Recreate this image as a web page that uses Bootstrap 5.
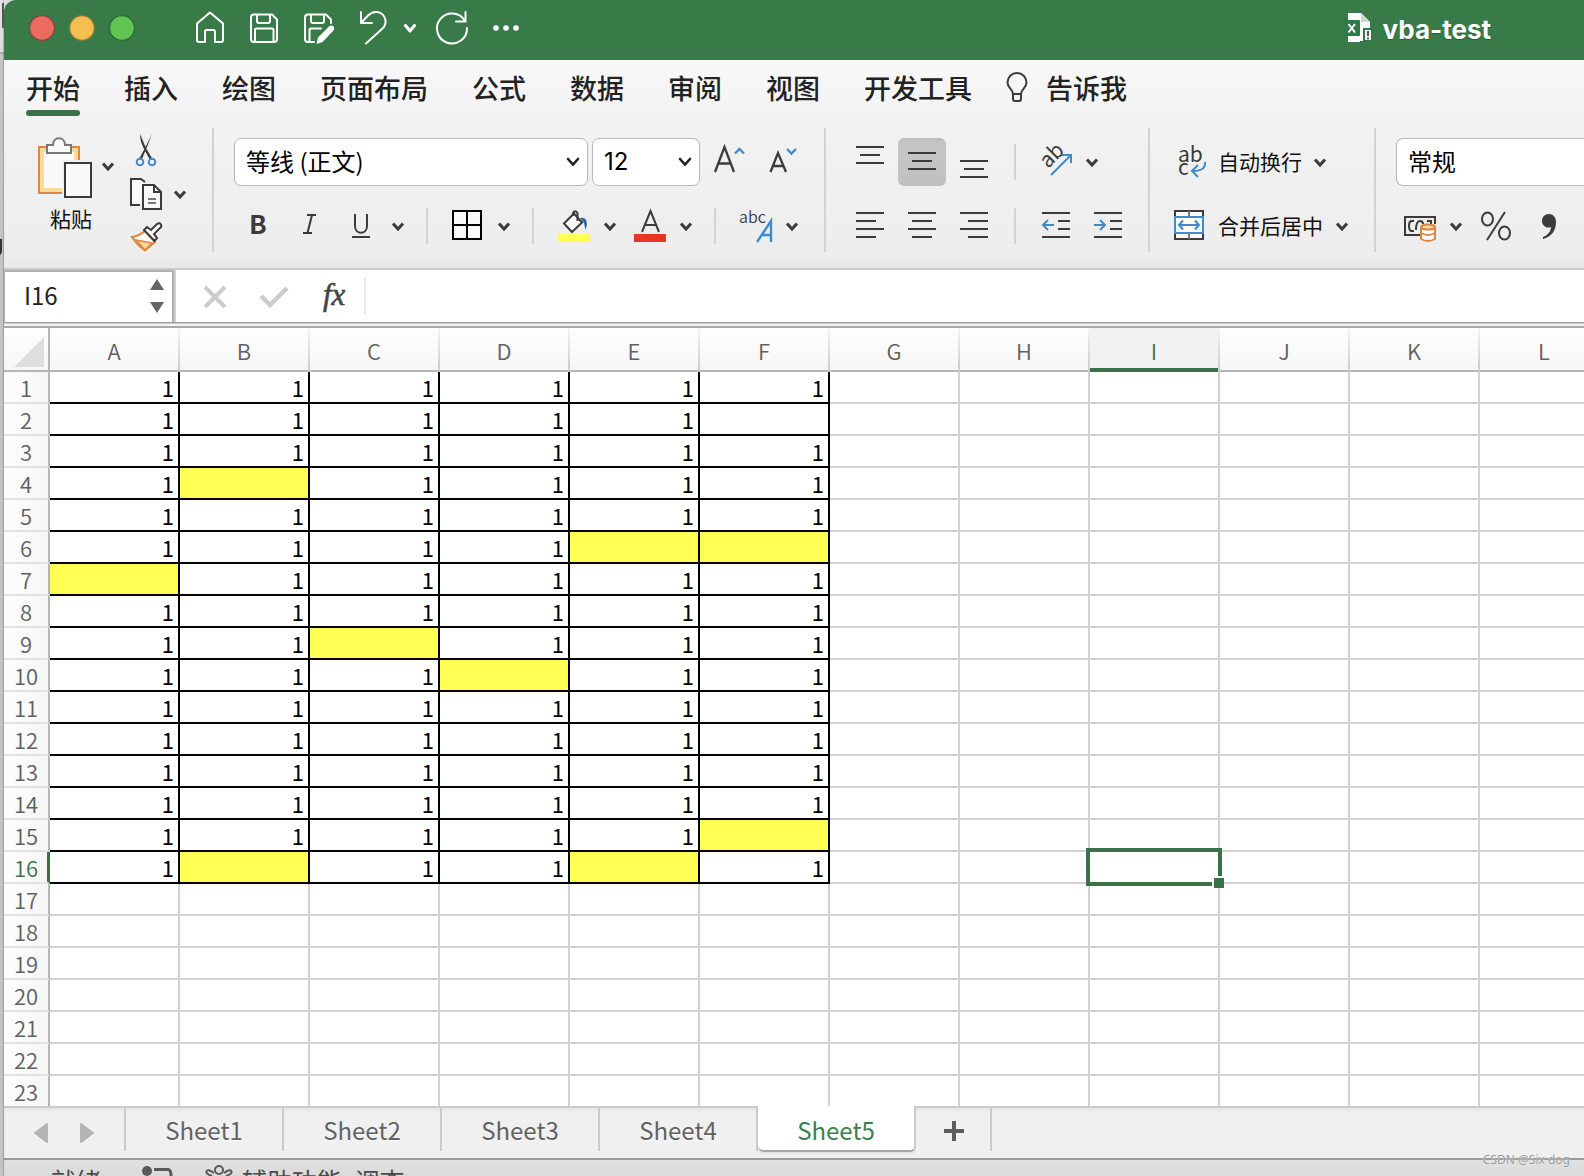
<!DOCTYPE html>
<html lang="zh-CN">
<head>
<meta charset="utf-8">
<meta name="viewport" content="width=device-width, initial-scale=1">
<title>vba-test</title>
<link href="https://cdn.jsdelivr.net/npm/bootstrap@5.3.0/dist/css/bootstrap.min.css" rel="stylesheet">
<style>
:root{--xl-green:#397a49;--xl-sel:#3a7248;--line:#d2d2d2;--ink:#3b3b3b;--blue:#3f8bcb}
body{font-family:"Noto Sans CJK SC",sans-serif;background:#dcdcdc;color:#222}
svg{display:block;flex:none}
.desk{width:4px;background:linear-gradient(90deg,#0000 3px,#0003 3px),linear-gradient(#e4e4e4,#dadada 52px,#aaa 52px,#aaa 54px,#c4c4c4 54px)}
.win{min-width:0}
button{border:0;background:none;padding:0;color:inherit}
/* title bar */
.titlebar{height:60px;background:var(--xl-green);border-top-left-radius:12px}
.doc-title{font:700 26px/32px Inter,sans-serif;color:#fff;padding-right:93px;text-shadow:0 1px 1px #0004}
/* ribbon */
.ribbon{background:linear-gradient(#f8f8f8,#f2f2f2 30%,#ededed 95%,#e8e8e8);border-bottom:2px solid #c9c9c9}
.menu-row{gap:44px;padding:0 22px;height:60px}
.menu-row .nav-link{padding:9px 0 0;font-size:27px;line-height:38px;font-weight:500;color:#222}
.menu-row .nav-link.active::after{content:"";display:block;height:6px;margin-top:3px;border-radius:3px;background:var(--xl-sel)}
.tools{padding:8px 0 16px}
.rgroup{padding:0 18px 0 20px;height:124px;flex:none}
.rgroup+.rgroup{border-left:2px solid var(--line)}
.two-rows{padding-top:10px;gap:16px}
.two-rows>div{height:48px}
.tsep{width:2px;height:36px;background:var(--line);flex:none}
.msep{margin:0 16px}
.lbl{font-size:21px;line-height:28px;color:#111;padding-bottom:2px}
.xl-select{height:48px;border:1px solid #b8b8b8;border-radius:7px;color:#000;font-size:24px;line-height:36px;padding:4px 30px 6px 11px;background-position:right 7px center;background-size:14px 10px;
--bs-form-select-bg-img:url("data:image/svg+xml,%3csvg xmlns='http://www.w3.org/2000/svg' viewBox='0 0 14 10'%3e%3cpath d='M2 2l5 5.500 5-5.500' fill='none' stroke='%23222' stroke-width='2.600' stroke-linecap='round'/%3e%3c/svg%3e")}
.w-font{width:354px}.w-size{width:108px;font-family:Inter,sans-serif;padding-bottom:4px}
.pressed{background:linear-gradient(#bcbcbc,#c6c6c6 12%,#c0c0c0);border-radius:6px}
svg .k{stroke:var(--ink);fill:none;stroke-width:2}
svg .b{stroke:var(--blue);fill:none;stroke-width:2}
svg .w{stroke:#fff;fill:none;stroke-width:2;stroke-linejoin:round;stroke-linecap:round}
svg .c{stroke:var(--ink);fill:none;stroke-width:3}
svg .h{stroke:#dc8743;fill:none;stroke-width:2}
svg text{fill:var(--ink);font-family:"Noto Sans CJK SC",sans-serif}
/* formula bar */
.fbar{height:52px;background:#fff}
.namebox{width:170px;border:solid #b0b0b0;border-width:2px 2px 0 1px}
.nb-wrap{border-right:2px solid #d0d0d0}
.namebox input{width:120px;font-size:24px;line-height:36px;padding:0 0 5px 19px;border:0;background:none;color:#222}
.finput{border:0;font-size:24px;min-width:0}
.fline{height:6px;background:#f4f4f4;border-top:1px solid #9c9c9c;border-bottom:2px solid #a8a8a8;box-shadow:inset 0 1px #ccc}
/* grid */
.sheet-area{min-height:0;overflow:hidden;background:#fff}
.cells{table-layout:fixed;width:1606px;border-collapse:separate;border-spacing:0;font-size:22px;line-height:30px;color:#000}
.cells th{font-weight:350;color:#606060;text-align:center;padding:0}
.cells thead th{height:44px;background:linear-gradient(#fefefe,#f6f6f6);line-height:42px;border-right:2px solid;border-image:linear-gradient(#f6f6f6,#c8c8c8) 1;border-image-width:0 2px 0 0;box-shadow:inset 0 -2px #b5b5b5}
.cells thead th.corner{border-image:none;border-color:#b5b5b5}
.cells thead th.cur{background:#f2f2f2;color:var(--xl-sel);box-shadow:inset 0 -4px var(--xl-sel)}
.cells tbody th{height:32px;background:linear-gradient(90deg,#fdfdfd,#f6f6f6);border-right:2px solid #b5b5b5;border-bottom:2px solid #e2e2e2}
.cells tbody th.cur{color:var(--xl-sel);border-right-color:var(--xl-sel);box-shadow:inset -1px 0 var(--xl-sel)}
.cells td{height:32px;padding:0 4px 0 0;text-align:right;border-right:2px solid var(--line);border-bottom:2px solid var(--line)}
.cells td.boxed{border-color:#000}
.cells td.hl{background:#ffff54}
.cells td.picked{position:relative}
.picked .frame{position:absolute;inset:-4px;border:4px solid var(--xl-sel)}
.picked .grip{position:absolute;right:-6px;bottom:-6px;width:12px;height:12px;border:2px solid #fff;border-right:0;border-bottom:0;background:var(--xl-sel)}
/* sheet tabs */
.tabbar{height:52px;background:#f0f0f0;border-top:2px solid #cbcbcb;box-shadow:inset 0 3px 4px -2px #0001}
.arrows{width:122px;height:43px;border-right:2px solid #cbcbcb}
.sheet-tabs .nav-link{width:158px;height:43px;padding:0;border:0;border-right:2px solid #cbcbcb;border-radius:0;font-size:24px;line-height:44px;font-weight:400;color:#626262;text-align:center;text-shadow:0 1px #fff}
.sheet-tabs .nav-link.active{background:#fff;color:#3d8050;margin-top:-2px;height:46px;line-height:48px;border-bottom:2px solid #a6a6a6;border-radius:0 0 6px 6px;box-shadow:0 2px 2px #0001}
.addtab{width:76px;height:43px;border-right:2px solid #cbcbcb}
/* status bar */
.status{height:18px;overflow:hidden;border-top:2px solid #9b9b9b;background:linear-gradient(#e2e2e2,#dadada);font-size:25px;line-height:36px;color:#4a4a4a;padding-left:47px}
.stat-text{padding-top:2px}
.credit{position:absolute;right:14px;bottom:7px;font:12px/18px "Noto Sans",sans-serif;color:#999;text-shadow:0 0 1px #fff}
.backdrop{position:absolute;left:0;top:0;z-index:-1}
</style>
</head>
<body class="vh-100 overflow-hidden d-flex position-relative">
<div class="desk flex-shrink-0 position-relative"><svg width="4" height="260" viewBox="0 0 4 260"><path d="M4 4H3V27H4" stroke="#555" stroke-width="2" fill="none"/><path d="M0 239H2V250Q2 254 0 255" fill="#333"/></svg></div>
<div class="win flex-grow-1 d-flex flex-column overflow-hidden">

<header class="titlebar d-flex align-items-center justify-content-between flex-shrink-0">
  <div class="d-flex">
    <svg width="176" height="60" viewBox="4 0 176 60"><g stroke-width="1.500"><circle cx="42" cy="28" r="12.500" fill="#ed6a5e" stroke="#7d4a3e"/><circle cx="82" cy="28" r="12.500" fill="#f5bf4f" stroke="#7c7a3c"/><circle cx="122" cy="28" r="12.500" fill="#61c554" stroke="#2f7038"/></g></svg>
    <button aria-label="主页"><svg width="56" height="60" viewBox="180 1 56 60"><path class="w" d="M197 24.500L210 13.500 223 24.500V41a2 2 0 0 1-2 2H215V32.500a1.500 1.500 0 0 0-1.500-1.500H206.500a1.500 1.500 0 0 0-1.500 1.500V43H199a2 2 0 0 1-2-2Z"/></svg></button>
    <button aria-label="保存"><svg width="54" height="60" viewBox="236 1 54 60"><path class="w" d="M254 15.500H272L277 20.500V40a3 3 0 0 1-3 3H254a3 3 0 0 1-3-3V18.500a3 3 0 0 1 3-3ZM257 16V22a2 2 0 0 0 2 2H268a2 2 0 0 0 2-2V16M255 43V31a1.500 1.500 0 0 1 1.500-1.500H272a1.500 1.500 0 0 1 1.500 1.500V43"/></svg></button>
    <button aria-label="另存为"><svg width="60" height="60" viewBox="290 1 60 60"><path class="w" d="M331 24V20.500L326 15.500H308a3 3 0 0 0-3 3V40a3 3 0 0 0 3 3H314M311 16V22a2 2 0 0 0 2 2H322a2 2 0 0 0 2-2V16M309.500 43V31a1.500 1.500 0 0 1 1.500-1.500H321"/><path d="M316.500 45l1.500-6.500 11-11q3-2 4.500 0 1.500 2-.5 4.500l-10.500 11Z" fill="#fff"/></svg></button>
    <button aria-label="撤消"><svg width="76" height="60" viewBox="350 1 76 60"><path class="w" d="M361 13V24H372M361.500 23.500L368 16.500C373 11.500 380 12 383.500 16.500 387 21 386 26.500 382 30L366 44.500"/><path class="w" style="stroke-width:3" d="M405.500 26.500L410 32 414.500 26.500"/></svg></button>
    <button aria-label="重复"><svg width="52" height="60" viewBox="426 1 52 60"><path class="w" d="M465.500 13V22.500H456M465 22A15 15 0 1 0 467 29"/></svg></button>
    <button aria-label="更多"><svg width="56" height="60" viewBox="478 1 56 60"><g fill="#fff"><circle cx="496" cy="29" r="2.800"/><circle cx="506" cy="29" r="2.800"/><circle cx="516" cy="29" r="2.800"/></g></svg></button>
  </div>
  <div class="d-flex align-items-center">
    <svg width="38" height="60" viewBox="1344 0 38 60" overflow="visible"><path d="M1347 13H1360L1369 22V42H1347Z" fill="#fff"/><path d="M1360 13V22H1369Z" fill="#d5d5d5"/><rect x="1343" y="20" width="16" height="16" rx="1" fill="#2f7a48"/><path d="M1347.500 24L1354 32.500M1354 24L1347.500 32.500" stroke="#fff" stroke-width="2"/><path d="M1363 29H1371V41H1363Z" fill="#fff" stroke="#2f7a48" stroke-width="2"/><path d="M1359 42H1369M1371 30H1375" stroke="#2f7a48" stroke-width="2"/><path d="M1367 31V36M1367 37.500V39.500" stroke="#555" stroke-width="2"/></svg>
    <div class="doc-title">vba-test</div>
  </div>
</header>

<section class="ribbon flex-shrink-0">
  <ul class="nav flex-nowrap menu-row text-nowrap">
    <li><a class="nav-link active" href="#">开始</a></li><li><a class="nav-link" href="#">插入</a></li><li><a class="nav-link" href="#">绘图</a></li><li><a class="nav-link" href="#">页面布局</a></li><li><a class="nav-link" href="#">公式</a></li><li><a class="nav-link" href="#">数据</a></li><li><a class="nav-link" href="#">审阅</a></li><li><a class="nav-link" href="#">视图</a></li><li><a class="nav-link" href="#">开发工具</a></li>
    <li><a class="nav-link d-flex" href="#"><svg width="30" height="38" viewBox="1026 70 30 38" overflow="visible"><path class="k" d="M1023 95C1023 90 1017.500 89 1017.500 83.500a9.500 9.500 0 0 1 19 0C1036.500 89 1031 90 1031 95ZM1023 95V100a2 2 0 0 0 2 2H1029a2 2 0 0 0 2-2V95"/></svg><span>告诉我</span></a></li>
  </ul>
  <div class="tools d-flex overflow-hidden">
    <div class="rgroup d-flex">
      <button class="d-flex flex-column align-items-center">
        <svg width="94" height="76" viewBox="24 128 94 76"><path d="M39 147H79V193H39Z" fill="#f6dc98" stroke="#dc8743" stroke-width="2"/><path d="M44 152H74V188H44Z" fill="#fafafa"/><path d="M62 160H96V200H62Z" fill="#f0f0f0"/><path d="M47 153V145H53C53 136 65 136 65 145H71V153Z" fill="#fafafa" stroke="#777" stroke-width="2"/><path d="M65 163H91V197H65Z" fill="#fafafa" stroke="#3b3b3b" stroke-width="2"/><path class="c" d="M103 163.500L108 169 113 163.500"/></svg>
        <span class="lbl">粘贴</span>
      </button>
      <div class="d-flex flex-column">
        <button aria-label="剪切"><svg width="76" height="44" viewBox="118 128 76 44"><path d="M140 134L146 148 152.500 159 150 160 144 149C141 143 140 139 140 134ZM152 134L147 147 141.500 160 139 159 145 148Z" fill="#3b3b3b"/><circle class="b" cx="140" cy="162" r="3.300"/><circle class="b" cx="152" cy="162" r="3.300"/></svg></button>
        <button aria-label="复制"><svg width="76" height="44" viewBox="118 172 76 44"><path d="M140 205H131V179H141L145 182" fill="#fafafa" stroke="#3b3b3b" stroke-width="2"/><path d="M143 185H154L161 192V209H143Z" fill="#fafafa" stroke="#3b3b3b" stroke-width="2"/><path class="k" d="M154 185V192H161"/><path d="M148 199H156M148 203H156" stroke="#777" stroke-width="2"/><path class="c" d="M175 191.500L180 197 185 191.500"/></svg></button>
        <button aria-label="格式刷"><svg width="76" height="36" viewBox="118 216 76 36"><path d="M145 231Q139 236 132 237 137 245 145 250.500L155 242Z" fill="#fafafa" stroke="#dc8743" stroke-width="2"/><path d="M136 240L152 243 145 250Z" fill="#f6dc98" stroke="#dc8743" stroke-width="1.500"/><path d="M144 230L147 227 151 230 157 224Q160 222 161 225 162 227 160 228L154 234 157 238 154.500 241Z" fill="#fafafa" stroke="#3b3b3b" stroke-width="2"/></svg></button>
      </div>
    </div>

    <div class="rgroup d-flex flex-column two-rows">
      <div class="d-flex gap-1">
        <select class="form-select xl-select w-font" aria-label="字体"><option>等线 (正文)</option></select>
        <select class="form-select xl-select w-size" aria-label="字号"><option>12</option></select>
        <button aria-label="增大字号"><svg width="48" height="48" viewBox="704 138 48 48"><path d="M715 172L724.500 147 734 172M718 163.500H731" class="k" style="stroke-width:2.300"/><path class="b" style="stroke-width:2.400" d="M735 153.500L739.500 149 744 153.500"/></svg></button>
        <button aria-label="减小字号"><svg width="50" height="48" viewBox="756 138 50 48"><path d="M770.500 172L778 153 786 172M773 166H783.500" class="k" style="stroke-width:2.300"/><path class="b" style="stroke-width:2.400" d="M787 149L791.500 153.500 796 149"/></svg></button>
      </div>
      <div class="d-flex align-items-center">
        <button aria-label="加粗"><svg width="48" height="48" viewBox="234 202 48 48"><text x="249" y="234" font-size="26" font-weight="700">B</text></svg></button>
        <button aria-label="倾斜"><svg width="56" height="48" viewBox="282 202 56 48"><path class="k" d="M307 215H316M303 233H312M312 215L307.500 233"/></svg></button>
        <button aria-label="下划线"><svg width="88" height="48" viewBox="338 202 88 48"><path class="k" d="M355 214V226C355 235 367 235 367 226V214M352 237H370"/><path class="c" d="M393 223.500L398 229 403 223.500"/></svg></button>
        <i class="tsep"></i>
        <button aria-label="边框"><svg width="104" height="48" viewBox="428 202 104 48"><path d="M453 211H481V239H453ZM467 211V239M453 225H481" fill="#fafafa" stroke="#000" stroke-width="2"/><path class="c" d="M499 223.500L504 229 509 223.500"/></svg></button>
        <i class="tsep"></i>
        <button aria-label="填充颜色"><svg width="91" height="48" viewBox="534 202 91 48"><path d="M564 223.500L574 213.500 582 222.500 572 232Z" fill="#fafafa" stroke="#3b3b3b" stroke-width="2"/><path class="k" d="M573 216V213Q575 209.500 577.500 213V221"/><path d="M580 218Q587 216 587 225L585.500 230 584 223Z" fill="#2a66ad"/><path d="M558 234H590V242H558Z" fill="#ffff54"/><path class="c" d="M605 223.500L610 229 615 223.500"/></svg></button>
        <button aria-label="字体颜色"><svg width="89" height="48" viewBox="625 202 89 48"><path class="k" d="M642 232L650.500 211 659 232M645 225H656"/><path d="M634 234H666V242H634Z" fill="#ea3323"/><path class="c" d="M681 223.500L686 229 691 223.500"/></svg></button>
        <i class="tsep"></i>
        <button aria-label="拼音"><svg width="90" height="48" viewBox="716 202 90 48"><text x="739" y="223" font-size="16" font-weight="350">abc</text><path class="b" style="stroke-width:2.400" d="M757 242L771 221V242M762 235H771"/><path class="c" d="M787 223.500L792 229 797 223.500"/></svg></button>
      </div>
    </div>

    <div class="rgroup d-flex flex-column two-rows">
      <div class="d-flex align-items-center">
        <div class="d-flex gap-1">
          <button aria-label="顶端对齐"><svg width="48" height="48" viewBox="846 138 48 48"><path class="k" d="M856 147H884M860 155H880M856 163H884"/></svg></button>
          <button aria-label="垂直居中" class="pressed"><svg width="48" height="48" viewBox="898 138 48 48"><path class="k" d="M908 153H936M912 161H932M908 169H936"/></svg></button>
          <button aria-label="底端对齐"><svg width="48" height="48" viewBox="950 138 48 48"><path class="k" d="M960 161H988M964 169H984M960 177H988"/></svg></button>
        </div>
        <i class="tsep msep"></i>
        <button aria-label="方向"><svg width="80" height="48" viewBox="1032 138 80 48"><text transform="translate(1048 169) rotate(-45)" font-size="21">ab</text><path class="b" d="M1051 175L1071 155M1062 155H1071V163"/><path class="c" d="M1087 159.500L1092 165 1097 159.500"/></svg></button>
      </div>
      <div class="d-flex align-items-center">
        <div class="d-flex gap-1">
          <button aria-label="左对齐"><svg width="48" height="48" viewBox="846 202 48 48"><path class="k" d="M856 213H884M856 221H876M856 229H884M856 237H876"/></svg></button>
          <button aria-label="居中"><svg width="48" height="48" viewBox="898 202 48 48"><path class="k" d="M908 213H936M912 221H932M908 229H936M912 237H932"/></svg></button>
          <button aria-label="右对齐"><svg width="48" height="48" viewBox="950 202 48 48"><path class="k" d="M960 213H988M968 221H988M960 229H988M968 237H988"/></svg></button>
        </div>
        <i class="tsep msep"></i>
        <div class="d-flex gap-1">
          <button aria-label="减少缩进"><svg width="48" height="48" viewBox="1032 202 48 48"><path class="k" d="M1042 213H1070M1058 221H1070M1058 229H1070M1042 237H1070"/><path class="b" d="M1054 225H1043M1048 220L1043 225 1048 230"/></svg></button>
          <button aria-label="增加缩进"><svg width="46" height="48" viewBox="1084 202 46 48"><path class="k" d="M1094 213H1122M1110 221H1122M1110 229H1122M1094 237H1122"/><path class="b" d="M1094 225H1105M1100 220L1105 225 1100 230"/></svg></button>
        </div>
      </div>
    </div>

    <div class="rgroup d-flex flex-column two-rows">
      <div class="d-flex">
        <button class="d-flex align-items-center gap-2"><svg width="40" height="48" viewBox="1170 138 40 48"><text x="1178" y="162" font-size="21">ab</text><text x="1178" y="175" font-size="21">c</text><path class="b" d="M1205 162Q1206 171 1193 171M1198 165L1192 171 1198 177"/></svg><span class="lbl">自动换行</span><svg width="20" height="48" viewBox="1310 138 20 48"><path class="c" d="M1315 159.500L1320 165 1325 159.500"/></svg></button>
      </div>
      <div class="d-flex">
        <button class="d-flex align-items-center gap-2"><svg width="40" height="48" viewBox="1170 202 40 48"><path d="M1175 211H1203V239H1175Z" fill="#fafafa" stroke="#3b3b3b" stroke-width="2"/><path d="M1189 211V239" stroke="#777" stroke-width="2"/><path d="M1175 217H1203V233H1175Z" style="fill:#fafafa" class="b"/><path class="b" d="M1179 225H1199M1183 220.500L1179 225 1183 229.500M1195 220.500L1199 225 1195 229.500"/></svg><span class="lbl">合并后居中</span><svg width="25" height="48" viewBox="1331 202 25 48"><path class="c" d="M1337 223.500L1342 229 1347 223.500"/></svg></button>
      </div>
    </div>

    <div class="rgroup d-flex flex-column two-rows flex-grow-1 pe-0">
      <div class="d-flex"><select class="form-select xl-select rounded-end-0 border-end-0" style="background-image:none" aria-label="数字格式"><option>常规</option></select></div>
      <div class="d-flex">
        <button aria-label="货币"><svg width="74" height="48" viewBox="1396 202 74 48"><path class="k" d="M1420 235H1405V217H1435V224M1414 221H1411Q1409 222 1409 226 1409 230 1411 231H1414M1416 230Q1416 221 1420 221 1423 221 1423 224M1427 221H1431V225"/><path d="M1421 226Q1428 223 1435 226V240Q1428 243 1421 240Z" fill="#fafafa"/><ellipse class="h" style="fill:#f6dc98" cx="1428" cy="227" rx="7" ry="2.500"/><path class="h" d="M1421 227V239Q1428 243 1435 239V227M1421 233Q1428 237 1435 233"/><path class="c" d="M1451 223.500L1456 229 1461 223.500"/></svg></button>
        <button aria-label="百分比"><svg width="54" height="48" viewBox="1470 202 54 48"><g class="k"><ellipse cx="1487.500" cy="219" rx="5.500" ry="6.500"/><ellipse cx="1504.500" cy="233" rx="5.500" ry="6.500"/><path d="M1505 212L1487 240"/></g></svg></button>
        <button aria-label="千位分隔"><svg width="50" height="48" viewBox="1524 202 50 48"><path d="M1549 214C1553 214 1556 217 1556 222 1556 231 1551 237 1543 239V237C1548 235 1551 231 1551 227 1546 229 1542 225 1542 221 1542 217 1545 214 1549 214Z" fill="#3b3b3b"/></svg></button>
      </div>
    </div>
  </div>
</section>

<div class="fbar d-flex flex-shrink-0">
  <div class="nb-wrap d-flex">
    <div class="namebox d-flex align-items-center justify-content-between">
      <input value="I16" aria-label="名称框">
      <button aria-label="调整"><svg width="22" height="50" viewBox="150 272 22 50"><path d="M157 279L164 290H150ZM157 313L164 302H150Z" fill="#666"/></svg></button>
    </div>
  </div>
  <button aria-label="取消"><svg width="64" height="52" viewBox="176 270 64 52"><path d="M205 287L225 307M225 287L205 307" stroke="#ccc" stroke-width="4"/></svg></button>
  <button aria-label="输入"><svg width="58" height="52" viewBox="240 270 58 52"><path d="M261 296L270 305 287 288" stroke="#ccc" stroke-width="4.500" fill="none"/></svg></button>
  <button aria-label="插入函数"><svg width="66" height="52" viewBox="298 270 66 52"><text x="323" y="305" style="font:italic 31px 'Liberation Serif',serif;fill:#444;stroke:#444;stroke-width:.6">fx</text></svg></button>
  <div class="tsep align-self-center opacity-50"></div>
  <input class="finput flex-grow-1" aria-label="编辑栏">
</div>
<div class="fline flex-shrink-0"></div>

<main class="sheet-area flex-grow-1">
  <table class="cells" id="cells"><colgroup><col style="width:46px"></colgroup><thead></thead><tbody></tbody></table>
</main>

<nav class="tabbar d-flex flex-shrink-0">
  <div class="arrows d-flex"><button aria-label="上一张"><svg width="60" height="43" viewBox="4 1109 60 43"><path d="M35 1134L47 1125V1143Z" fill="#b4b4b4" stroke="#b4b4b4" stroke-width="2" stroke-linejoin="round"/></svg></button><button aria-label="下一张"><svg width="58" height="43" viewBox="64 1109 58 43"><path d="M93 1134L81 1125V1143Z" fill="#b4b4b4" stroke="#b4b4b4" stroke-width="2" stroke-linejoin="round"/></svg></button></div>
  <ul class="nav sheet-tabs flex-nowrap">
    <li><a class="nav-link" href="#">Sheet1</a></li><li><a class="nav-link" href="#">Sheet2</a></li><li><a class="nav-link" href="#">Sheet3</a></li><li><a class="nav-link" href="#">Sheet4</a></li><li><a class="nav-link active" href="#">Sheet5</a></li>
  </ul>
  <button class="addtab" aria-label="新建工作表"><svg width="74" height="43" viewBox="916 1110 74 43"><path d="M944 1133H964M954 1123V1143" stroke="#5c5c5c" stroke-width="4"/></svg></button>
</nav>

<footer class="status d-flex flex-shrink-0">
  <span class="stat-text">就绪</span>
  <svg width="90" height="16" viewBox="101 1160 90 16"><circle cx="147" cy="1171" r="5" fill="#5a5a5a"/><path d="M154 1169.500H168Q171 1169.500 171 1176" fill="none" stroke="#5a5a5a" stroke-width="3"/></svg>
  <svg width="51" height="16" viewBox="191 1160 51 16"><g fill="none" stroke="#5a5a5a" stroke-width="2"><circle cx="219" cy="1170" r="4"/><path d="M214 1173Q207 1168 206.500 1172 206 1174 212 1176M224 1173Q231 1168 231.500 1172 232 1174 226 1176"/></g></svg>
  <span class="stat-text">辅助功能: 调查</span>
</footer>
</div>
<div class="credit">CSDN @Six dog</div>

<script>
const letters = 'ABCDEFGHIJKL'.split('');
const yellow = ['B4','E6','F6','A7','C9','D10','F15','B16','E16'];
const blank = [...yellow, 'F2'];
const table = document.getElementById('cells');
table.querySelector('colgroup').innerHTML += '<col style="width:130px">'.repeat(12);
table.tHead.innerHTML = '<tr><th class="corner"><svg width="44" height="42" viewBox="4 328 44 42"><path d="M44 336V366H14Z" fill="#dedede"/></svg></th>' +
  letters.map(l => `<th class="${l === 'I' ? 'cur' : ''}">${l}</th>`).join('') + '</tr>';
let rows = '';
for (let r = 1; r <= 23; r++) {
  rows += `<tr><th class="${r === 16 ? 'cur' : ''}">${r}</th>`;
  letters.forEach((l, i) => {
    const id = l + r, data = i < 6 && r < 17;
    const cls = [data && 'boxed', yellow.includes(id) && 'hl', id === 'I16' && 'picked'].filter(Boolean).join(' ');
    const inner = id === 'I16' ? '<span class="frame"></span><span class="grip"></span>' : data && !blank.includes(id) ? '1' : '';
    rows += `<td class="${cls}">${inner}</td>`;
  });
  rows += '</tr>';
}
table.tBodies[0].innerHTML = rows;
</script>
<script src="https://cdn.jsdelivr.net/npm/bootstrap@5.3.0/dist/js/bootstrap.bundle.min.js"></script>
</body>
</html>
